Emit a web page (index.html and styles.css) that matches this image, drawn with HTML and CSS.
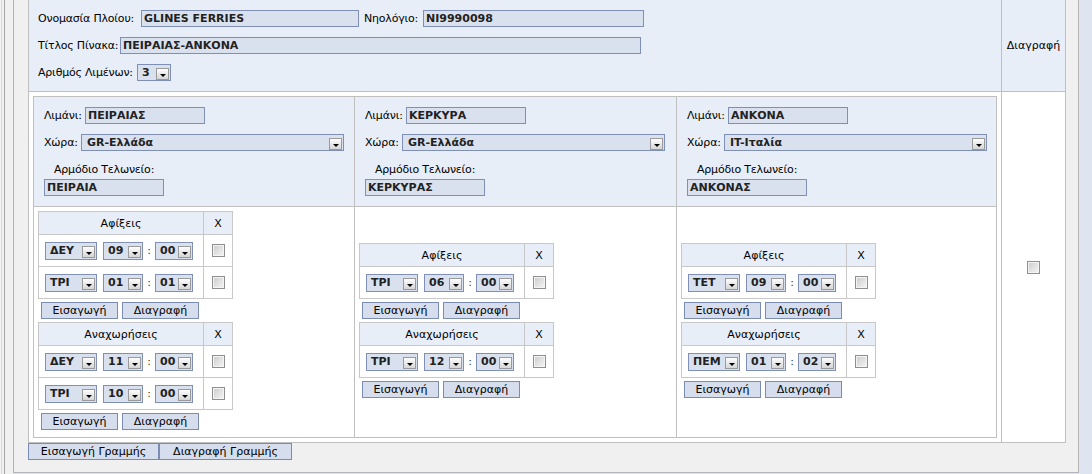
FILE: index.html
```html
<!DOCTYPE html>
<html lang="el">
<head>
<meta charset="utf-8">
<title>Δρομολόγια Πλοίου</title>
<link rel="stylesheet" href="styles.css">
</head>
<body>
<div class="page">
  <div class="edge"></div>
  <div class="panel">
    <div class="main">
      <div class="head">
        <div class="frow">
          <span class="lbl w-ship">Ονομασία Πλοίου:</span>
          <span class="inp w-ship-in">GLINES FERRIES</span>
          <span class="lbl w-reg">Νηολόγιο:</span>
          <span class="inp w-reg-in">NI9990098</span>
        </div>
        <div class="frow">
          <span class="lbl w-title">Τίτλος Πίνακα:</span>
          <span class="inp w-title-in">ΠΕΙΡΑΙΑΣ-ΑΝΚΟΝΑ</span>
        </div>
        <div class="frow">
          <span class="lbl w-num">Αριθμός Λιμένων:</span>
          <span class="sel w-num-in"><span class="val">3</span><span class="arr"></span></span>
        </div>
      </div>
      <div class="delh">Διαγραφή</div>

      <div class="bodyc">
        <div class="ports">
          <div class="ptop">
            <div class="prow"><span class="lbl w-port">Λιμάνι:</span><span class="inp w-port-in">ΠΕΙΡΑΙΑΣ</span></div>
            <div class="prow r2"><span class="lbl w-cty">Χώρα:</span><span class="sel w-cty-in"><span class="val">GR-Ελλάδα</span><span class="arr"></span></span></div>
            <div class="prow r3"><span class="lbl ind">Αρμόδιο Τελωνείο:</span></div>
            <div class="prow r4"><span class="inp w-port-in">ΠΕΙΡΑΙΑ</span></div>
          </div>
          <div class="ptop">
            <div class="prow"><span class="lbl w-port">Λιμάνι:</span><span class="inp w-port-in">ΚΕΡΚΥΡΑ</span></div>
            <div class="prow r2"><span class="lbl w-cty">Χώρα:</span><span class="sel w-cty-in"><span class="val">GR-Ελλάδα</span><span class="arr"></span></span></div>
            <div class="prow r3"><span class="lbl ind">Αρμόδιο Τελωνείο:</span></div>
            <div class="prow r4"><span class="inp w-port-in">ΚΕΡΚΥΡΑΣ</span></div>
          </div>
          <div class="ptop">
            <div class="prow"><span class="lbl w-port">Λιμάνι:</span><span class="inp w-port-in">ΑΝΚΟΝΑ</span></div>
            <div class="prow r2"><span class="lbl w-cty">Χώρα:</span><span class="sel w-cty-in"><span class="val">IT-Ιταλία</span><span class="arr"></span></span></div>
            <div class="prow r3"><span class="lbl ind">Αρμόδιο Τελωνείο:</span></div>
            <div class="prow r4"><span class="inp w-port-in">ΑΝΚΟΝΑΣ</span></div>
          </div>

          <div class="pbot">
            <div class="tt">
              <div class="th">Αφίξεις</div><div class="th">X</div>
              <div class="td">
                <span class="sel s-day"><span class="val">ΔΕΥ</span><span class="arr"></span></span>
                <span class="sel s-hr"><span class="val">09</span><span class="arr"></span></span>
                <span class="colon">:</span>
                <span class="sel s-mn"><span class="val">00</span><span class="arr"></span></span>
              </div>
              <div class="tx"><span class="cb"></span></div>
              <div class="td">
                <span class="sel s-day"><span class="val">ΤΡΙ</span><span class="arr"></span></span>
                <span class="sel s-hr"><span class="val">01</span><span class="arr"></span></span>
                <span class="colon">:</span>
                <span class="sel s-mn"><span class="val">01</span><span class="arr"></span></span>
              </div>
              <div class="tx"><span class="cb"></span></div>
            </div>
            <div class="btns"><button class="btn">Εισαγωγή</button><button class="btn">Διαγραφή</button></div>
            <div class="tt">
              <div class="th">Αναχωρήσεις</div><div class="th">X</div>
              <div class="td">
                <span class="sel s-day"><span class="val">ΔΕΥ</span><span class="arr"></span></span>
                <span class="sel s-hr"><span class="val">11</span><span class="arr"></span></span>
                <span class="colon">:</span>
                <span class="sel s-mn"><span class="val">00</span><span class="arr"></span></span>
              </div>
              <div class="tx"><span class="cb"></span></div>
              <div class="td">
                <span class="sel s-day"><span class="val">ΤΡΙ</span><span class="arr"></span></span>
                <span class="sel s-hr"><span class="val">10</span><span class="arr"></span></span>
                <span class="colon">:</span>
                <span class="sel s-mn"><span class="val">00</span><span class="arr"></span></span>
              </div>
              <div class="tx"><span class="cb"></span></div>
            </div>
            <div class="btns"><button class="btn">Εισαγωγή</button><button class="btn">Διαγραφή</button></div>
          </div>

          <div class="pbot">
            <div class="tt">
              <div class="th">Αφίξεις</div><div class="th">X</div>
              <div class="td">
                <span class="sel s-day"><span class="val">ΤΡΙ</span><span class="arr"></span></span>
                <span class="sel s-hr"><span class="val">06</span><span class="arr"></span></span>
                <span class="colon">:</span>
                <span class="sel s-mn"><span class="val">00</span><span class="arr"></span></span>
              </div>
              <div class="tx"><span class="cb"></span></div>
            </div>
            <div class="btns"><button class="btn">Εισαγωγή</button><button class="btn">Διαγραφή</button></div>
            <div class="tt">
              <div class="th">Αναχωρήσεις</div><div class="th">X</div>
              <div class="td">
                <span class="sel s-day"><span class="val">ΤΡΙ</span><span class="arr"></span></span>
                <span class="sel s-hr"><span class="val">12</span><span class="arr"></span></span>
                <span class="colon">:</span>
                <span class="sel s-mn"><span class="val">00</span><span class="arr"></span></span>
              </div>
              <div class="tx"><span class="cb"></span></div>
            </div>
            <div class="btns"><button class="btn">Εισαγωγή</button><button class="btn">Διαγραφή</button></div>
          </div>

          <div class="pbot">
            <div class="tt">
              <div class="th">Αφίξεις</div><div class="th">X</div>
              <div class="td">
                <span class="sel s-day"><span class="val">ΤΕΤ</span><span class="arr"></span></span>
                <span class="sel s-hr"><span class="val">09</span><span class="arr"></span></span>
                <span class="colon">:</span>
                <span class="sel s-mn"><span class="val">00</span><span class="arr"></span></span>
              </div>
              <div class="tx"><span class="cb"></span></div>
            </div>
            <div class="btns"><button class="btn">Εισαγωγή</button><button class="btn">Διαγραφή</button></div>
            <div class="tt">
              <div class="th">Αναχωρήσεις</div><div class="th">X</div>
              <div class="td">
                <span class="sel s-day"><span class="val">ΠΕΜ</span><span class="arr"></span></span>
                <span class="sel s-hr"><span class="val">01</span><span class="arr"></span></span>
                <span class="colon">:</span>
                <span class="sel s-mn"><span class="val">02</span><span class="arr"></span></span>
              </div>
              <div class="tx"><span class="cb"></span></div>
            </div>
            <div class="btns"><button class="btn">Εισαγωγή</button><button class="btn">Διαγραφή</button></div>
          </div>
        </div>
      </div>
      <div class="delb"><span class="cb"></span></div>
    </div>
    <div class="rowbtns">
      <button class="btn b-add">Εισαγωγή Γραμμής</button><button class="btn b-del">Διαγραφή Γραμμής</button>
    </div>
  </div>
</div>
</body>
</html>
```

FILE: styles.css
```css
* { box-sizing: border-box; }
html, body { margin: 0; padding: 0; }
body {
  width: 1092px;
  height: 474px;
  overflow: hidden;
  background: #dfe5f0;
  font-family: "DejaVu Sans", "Liberation Sans", sans-serif;
  font-size: 11px;
  color: #000;
}
.page { display: flex; height: 474px; }
.edge {
  width: 13px;
  background: linear-gradient(to right, #f4f4f4 0 1px, #d8d8d8 1px 2px, #f0f0f0 2px 4px, #a8a8a8 4px 5px, #f0f0f0 5px);
}
.panel {
  width: 1066px;
  height: 473px;
  background: #f0f0f0;
  border: 1px solid #b4b4b4;
  border-top: 0;
  padding-left: 14px;
}
.main {
  width: 1038px;
  display: grid;
  grid-template-columns: 972px 63px;
  grid-template-rows: 91px 350px;
  gap: 1px;
  padding: 0 1px 1px;
  background: #c0c0c0;
}
.head {
  background: #e8eef7;
  padding: 10px 0 0 9px;
  display: flex;
  flex-direction: column;
  gap: 10px;
}
.frow { display: flex; align-items: center; height: 17px; }
.lbl { white-space: nowrap; flex: none; letter-spacing: -0.2px; }
.w-ship { width: 103px; }
.w-reg { width: 59px; margin-left: 5px; }
.w-title { width: 82px; }
.w-num { width: 99px; }
.w-port { width: 41px; }
.w-cty { width: 37px; }

.inp, .sel {
  flex: none;
  height: 17px;
  border: 1px solid #7f90b4;
  background: #dae1ee;
  font-weight: bold;
  color: #222;
  display: flex;
  align-items: center;
  padding-left: 2px;
  white-space: nowrap;
}
.w-ship-in { width: 218px; }
.w-reg-in { width: 221px; }
.w-title-in { width: 521px; }
.w-num-in { width: 34px; padding-left: 4px; }
.w-port-in { width: 120px; }
.w-cty-in { width: 263px; padding-left: 5px; }

.sel .val { flex: 1; }
.arr {
  flex: none;
  width: 13px;
  height: 12px;
  margin: 2px 1px 0 0;
  border: 1px solid #9a9a9a;
  background: linear-gradient(#fdfdfd, #d6d6d6);
  position: relative;
}
.arr::after {
  content: "";
  position: absolute;
  left: 3px;
  bottom: 2px;
  border-left: 3px solid transparent;
  border-right: 3px solid transparent;
  border-top: 3px solid #000;
}

.delh {
  background: #e8eef7;
  display: flex;
  align-items: center;
  justify-content: center;
}
.bodyc { background: #fff; padding: 4px; }
.delb {
  background: #fff;
  display: flex;
  align-items: center;
  justify-content: center;
}

.ports {
  display: grid;
  grid-template-columns: 320px 321px 319px;
  grid-template-rows: 109px 230px;
  gap: 1px;
  padding: 1px;
  background: #c0c0c0;
}
.ptop {
  background: #e8eef7;
  padding: 10px 0 0 10px;
  display: flex;
  flex-direction: column;
}
.prow { display: flex; align-items: center; height: 17px; }
.r2 { margin-top: 10px; }
.r3 { margin-top: 11px; height: 15px; }
.r4 { margin-top: 2px; }
.ind { padding-left: 10px; }

.pbot {
  background: #fff;
  display: flex;
  flex-direction: column;
  justify-content: center;
  padding-left: 4px;
}
.tt {
  width: 195px;
  display: grid;
  grid-template-columns: 164px 28px;
  grid-template-rows: 22px;
  grid-auto-rows: 31px;
  gap: 1px;
  padding: 1px;
  background: #c8c8c8;
}
.th {
  background: #e8eef7;
  display: flex;
  align-items: center;
  justify-content: center;
}
.td {
  background: #fff;
  display: flex;
  align-items: center;
  padding-left: 6px;
}
.tx {
  background: #fff;
  display: flex;
  align-items: center;
  justify-content: center;
}
.td .sel { height: 18px; padding-left: 4px; }
.s-day { width: 52px; margin-right: 6px; }
.s-hr { width: 40px; }
.s-mn { width: 38px; }
.colon { width: 12px; text-align: center; color: #333; }

.cb {
  display: block;
  width: 13px;
  height: 13px;
  border: 1px solid #8e8f8f;
  box-shadow: inset 0 0 0 1px #f4f4f4;
  background: linear-gradient(135deg, #cbcbcb, #f6f6f6);
}

.btns { display: flex; gap: 4px; margin: 3px 0 3px 3px; }
.btn {
  height: 17px;
  width: 77px;
  margin: 0;
  padding: 0;
  border: 1px solid #7a8cb1;
  background: #d6deed;
  font-family: inherit;
  font-size: 11px;
  color: #000;
  line-height: 15px;
  white-space: nowrap;
}
.rowbtns { display: flex; }
.b-add { width: 131px; }
.b-del { width: 133px; }
```
